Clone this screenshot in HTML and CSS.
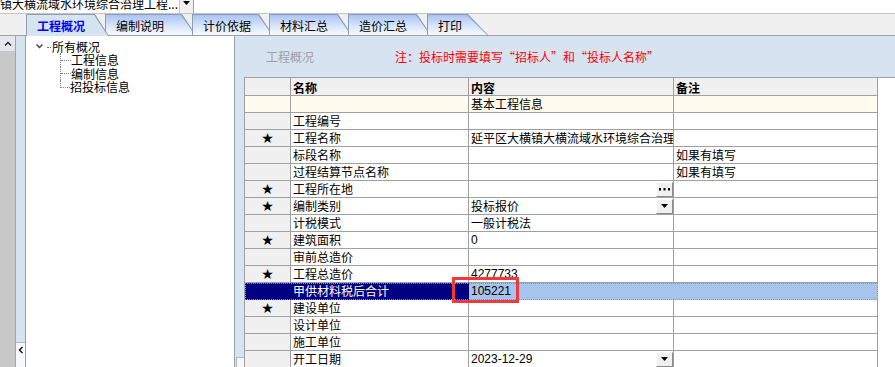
FILE: index.html
```html
<!DOCTYPE html>
<html lang="zh-CN">
<head>
    <meta charset="UTF-8">
    <title>工程概况</title>
    <link rel="stylesheet" href="styles.css">
</head>
<body>
<div class="app">
    <!-- 顶部工程下拉框 -->
    <div class="topbar">
        <div class="combo">
            <span class="combo-text">镇大横流域水环境综合治理工程...</span>
            <span class="combo-btn"><svg width="7" height="4" viewBox="0 0 7 4"><polygon points="0,0 7,0 3.5,4" fill="#000"/></svg></span>
        </div>
    </div>

    <!-- 页签 -->
    <div class="tabstrip">
        <div class="tab active t1"><span>工程概况</span></div>
        <div class="tab t2"><span>编制说明</span></div>
        <div class="tab t3"><span>计价依据</span></div>
        <div class="tab t4"><span>材料汇总</span></div>
        <div class="tab t5"><span>造价汇总</span></div>
        <div class="tab t6"><span>打印</span></div>
    </div>

    <div class="main">
        <div class="lside">
            <div class="lside-btn"><svg width="8" height="5" viewBox="0 0 8 5"><polyline points="1,4.5 4,1.5 7,4.5" fill="none" stroke="#222" stroke-width="1.4"/></svg></div>
        </div>
        <div class="lbar">
            <div class="lbar-btn"><svg width="5" height="8" viewBox="0 0 5 8"><polyline points="4.5,1 1.5,4 4.5,7" fill="none" stroke="#111" stroke-width="1.4"/></svg></div>
        </div>

        <!-- 左侧树 -->
        <div class="tree">
            <div class="tree-root">
                <svg class="chev" width="7" height="5" viewBox="0 0 7 5"><polyline points="0.5,0.5 3.5,3.5 6.5,0.5" fill="none" stroke="#444" stroke-width="1.4"/></svg>
                <span class="dots"></span>
                <span>所有概况</span>
            </div>
            <div class="leaves">
                <div class="leaf"><span class="hook"><i></i></span><span>工程信息</span></div>
                <div class="leaf"><span class="hook"><i></i></span><span>编制信息</span></div>
                <div class="leaf last"><span class="hook"><i></i></span><span>招投标信息</span></div>
            </div>
        </div>

        <!-- 右侧内容 -->
        <div class="content">
            <div class="content-head">
                <span class="title">工程概况</span>
                <span class="note">注：投标时需要填写“招标人”和“投标人名称”</span>
            </div>
            <div class="content-body">
                <div class="strip"><div class="strip-btn"></div></div>
                <div class="grid-wrap">
                    <div class="grid">
                        <div class="row head"><div></div><div>名称</div><div>内容</div><div>备注</div></div>
                        <div class="row group"><div></div><div></div><div>基本工程信息</div><div></div></div>
                        <div class="row"><div></div><div>工程编号</div><div></div><div></div></div>
                        <div class="row"><div class="star">★</div><div>工程名称</div><div>延平区大横镇大横流域水环境综合治理</div><div></div></div>
                        <div class="row"><div></div><div>标段名称</div><div></div><div>如果有填写</div></div>
                        <div class="row"><div></div><div>过程结算节点名称</div><div></div><div>如果有填写</div></div>
                        <div class="row"><div class="star">★</div><div>工程所在地</div><div class="cbox"><span class="val"></span><span class="cell-btn"><svg width="11" height="3" viewBox="0 0 11 3"><rect x="0" y="0" width="2" height="2.5" fill="#000"/><rect x="4.5" y="0" width="2" height="2.5" fill="#000"/><rect x="9" y="0" width="2" height="2.5" fill="#000"/></svg></span></div><div></div></div>
                        <div class="row"><div class="star">★</div><div>编制类别</div><div class="cbox"><span class="val">投标报价</span><span class="cell-btn"><svg width="7" height="4" viewBox="0 0 7 4"><polygon points="0,0 7,0 3.5,4" fill="#000"/></svg></span></div><div></div></div>
                        <div class="row"><div></div><div>计税模式</div><div>一般计税法</div><div></div></div>
                        <div class="row"><div class="star">★</div><div>建筑面积</div><div class="num">0</div><div></div></div>
                        <div class="row"><div></div><div>审前总造价</div><div></div><div></div></div>
                        <div class="row"><div class="star">★</div><div>工程总造价</div><div class="num">4277733</div><div></div></div>
                        <div class="row sel"><div></div><div>甲供材料税后合计</div><div class="num">105221</div><div></div></div>
                        <div class="row"><div class="star">★</div><div>建设单位</div><div></div><div></div></div>
                        <div class="row"><div></div><div>设计单位</div><div></div><div></div></div>
                        <div class="row"><div></div><div>施工单位</div><div></div><div></div></div>
                        <div class="row"><div></div><div>开工日期</div><div class="cbox"><span class="val num">2023-12-29</span><span class="cell-btn"><svg width="7" height="4" viewBox="0 0 7 4"><polygon points="0,0 7,0 3.5,4" fill="#000"/></svg></span></div><div></div></div>
                    </div>
                </div>
            </div>
        </div>
    </div>

    <!-- 标注框 -->
    <div class="mark"></div>
</div>
</body>
</html>
```

FILE: styles.css
```css
/* 全局 */
body {
    margin: 0;
    font-family: "Noto Sans CJK SC", "Liberation Sans", sans-serif;
    font-size: 12px;
    color: #000;
    background: #fff;
}

.app {
    width: 895px;
    height: 367px;
    overflow: hidden;
    position: relative;
    display: flex;
    flex-direction: column;
}

/* 顶部下拉框 */
.topbar {
    height: 13px;
    border-bottom: 1px solid #c4c4c4;
    display: flex;
    overflow: hidden;
    flex: none;
}

.combo {
    width: 194px;
    display: flex;
}

.combo-text {
    flex: 1;
    line-height: 12px;
    margin-top: -2px;
    white-space: nowrap;
    overflow: hidden;
}

.combo-btn {
    width: 13px;
    background: #f0f0f0;
    border-left: 1px solid #c8c8c8;
    border-right: 1px solid #a0a0a0;
    display: flex;
    justify-content: center;
    align-items: flex-start;
    padding-top: 1px;
}

/* 页签 */
.tabstrip {
    height: 21px;
    background: #f0f0f0;
    border-bottom: 1px solid #a0a0a0;
    display: flex;
    padding-left: 26px;
    position: relative;
    z-index: 0;
    flex: none;
}

.tab {
    position: relative;
    height: 21px;
    box-sizing: border-box;
    padding-left: 11px;
    line-height: 23px;
    flex: none;
}

.tab span {
    position: relative;
    z-index: 3;
}

.tab::before,
.tab::after {
    content: "";
    position: absolute;
    clip-path: polygon(0 0, calc(100% - 14px) 0, 100% 100%, 0 100%);
    z-index: -1;
}

.tab::before {
    top: 0;
    bottom: 0;
    left: 0;
    right: -4px;
    background: #8c9cb4;
}

.tab::after {
    top: 1px;
    bottom: 0;
    left: 1px;
    right: -3px;
    background: linear-gradient(#a9c4f5, #d8e5fb 55%, #f7faff);
}

.tab.active {
    height: 22px;
    color: #0000ff;
    font-weight: bold;
}

.tab.active::before,
.tab.active::after {
    z-index: 1;
}

.tab.active::after {
    background: #d6e3f0;
}

.t1 { width: 79px; }
.t2 { width: 87px; }
.t3 { width: 77px; }
.t4 { width: 79px; }
.t5 { width: 79px; }
.t6 { width: 51px; }

.t6::before,
.t6::after {
    clip-path: polygon(0 0, calc(100% - 20px) 0, 100% 100%, 0 100%);
}

.t6::before { right: -10px; }
.t6::after { right: -9px; }

/* 主体 */
.main {
    flex: 1;
    display: flex;
    min-height: 0;
}

.lside {
    width: 15px;
    background: #c8c8c8;
}

.lside-btn {
    height: 15px;
    background: #e2e7ed;
    display: flex;
    justify-content: center;
    align-items: center;
}

.lbar {
    width: 9px;
    border-left: 1px solid #98a4b4;
    background: #d6e3f0;
    display: flex;
    flex-direction: column;
    justify-content: flex-end;
}

.lbar-btn {
    height: 21px;
    background: #f6f8fa;
    border-top: 1px solid #b0b8c4;
    display: flex;
    justify-content: center;
    align-items: flex-start;
    padding-top: 3px;
}

/* 树 */
.tree {
    width: 208px;
    background: #fff;
    border-left: 1px solid #9aa2ac;
    border-right: 1px solid #9aa2ac;
    padding-top: 3px;
}

.tree-root {
    display: flex;
    align-items: center;
    height: 14px;
    padding-left: 10px;
}

.dots {
    width: 4px;
    margin: 3px 1px 0 4px;
    border-bottom: 1px dotted #707070;
}

.leaves {
    padding-left: 34px;
}

.leaf {
    display: flex;
    height: 13.5px;
    line-height: 13.5px;
}

.hook {
    width: 10px;
    border-left: 1px dotted #808080;
    display: flex;
    flex-direction: column;
}

.hook i {
    height: 50%;
    border-bottom: 1px dotted #808080;
}

.leaf.last .hook {
    border-left: none;
}

.leaf.last .hook i {
    border-left: 1px dotted #808080;
}

/* 右侧内容 */
.content {
    flex: 1;
    display: flex;
    flex-direction: column;
    background: #d6e3f0;
}

.content-head {
    height: 41px;
    display: flex;
    align-items: center;
    padding-left: 31px;
    flex: none;
}

.content-head .title {
    color: #a0a0a0;
}

.content-head .note {
    color: #ff0000;
    margin-left: 81px;
}

.content-body {
    flex: 1;
    display: flex;
    min-height: 0;
}

.strip {
    width: 9px;
    display: flex;
    flex-direction: column;
    justify-content: flex-end;
}

.strip-btn {
    height: 9px;
    margin-left: 1px;
    background: #f6f8fa;
    border-top: 1px solid #b0b8c4;
    border-left: 1px solid #b0b8c4;
}

.grid-wrap {
    flex: 1;
    background: #fff;
    border-top: 1px solid #a0a0a0;
}

.grid {
    width: 633px;
    border-left: 1px solid #a0a0a0;
}

/* 表格行 */
.row {
    display: grid;
    grid-template-columns: 46px 178px 205px 204px;
    height: 17px;
}

.row > div {
    border-right: 1px solid #a0a0a0;
    border-bottom: 1px solid #a0a0a0;
    padding: 0 2px;
    line-height: 16px;
    white-space: nowrap;
    overflow: hidden;
}

.row > div:first-child {
    background: #f0f0f0;
    text-align: center;
}

.row.head {
    height: 18px;
    background: #f0f0f0;
    font-weight: bold;
}

.row.head > div {
    line-height: 17px;
    padding-top: 1px;
    box-sizing: border-box;
}

.row.group > div,
.row.group > div:first-child {
    background: #fffbee;
}

.row > .star {
    font-family: "DejaVu Sans", sans-serif;
    font-size: 14px;
    line-height: 16px;
}

.num {
    font-family: "Liberation Sans", sans-serif;
}

.row > .cbox {
    display: flex;
    align-items: center;
    padding-right: 0;
}

.cbox .val {
    flex: 1;
}

.cell-btn {
    width: 15px;
    height: 13px;
    border: 1px solid;
    border-color: #fcfcfc #8a8a8a #8a8a8a #fcfcfc;
    background: #f0f0f0;
    display: flex;
    justify-content: center;
    align-items: center;
}

/* 选中行 */
.row.sel {
    outline: 1px dotted #a09858;
    outline-offset: -1px;
}

.row.sel > div,
.row.sel > div:first-child {
    background: #000080;
    color: #fff;
    border-right-color: transparent;
    border-bottom-color: transparent;
}

.row.sel > div:nth-child(n+3) {
    background: #a7c4ec;
    color: #000;
}

/* 红色标注框 */
.mark {
    position: absolute;
    left: 452px;
    top: 277px;
    width: 61px;
    height: 20px;
    border: 3px solid #f03a3a;
}
```
